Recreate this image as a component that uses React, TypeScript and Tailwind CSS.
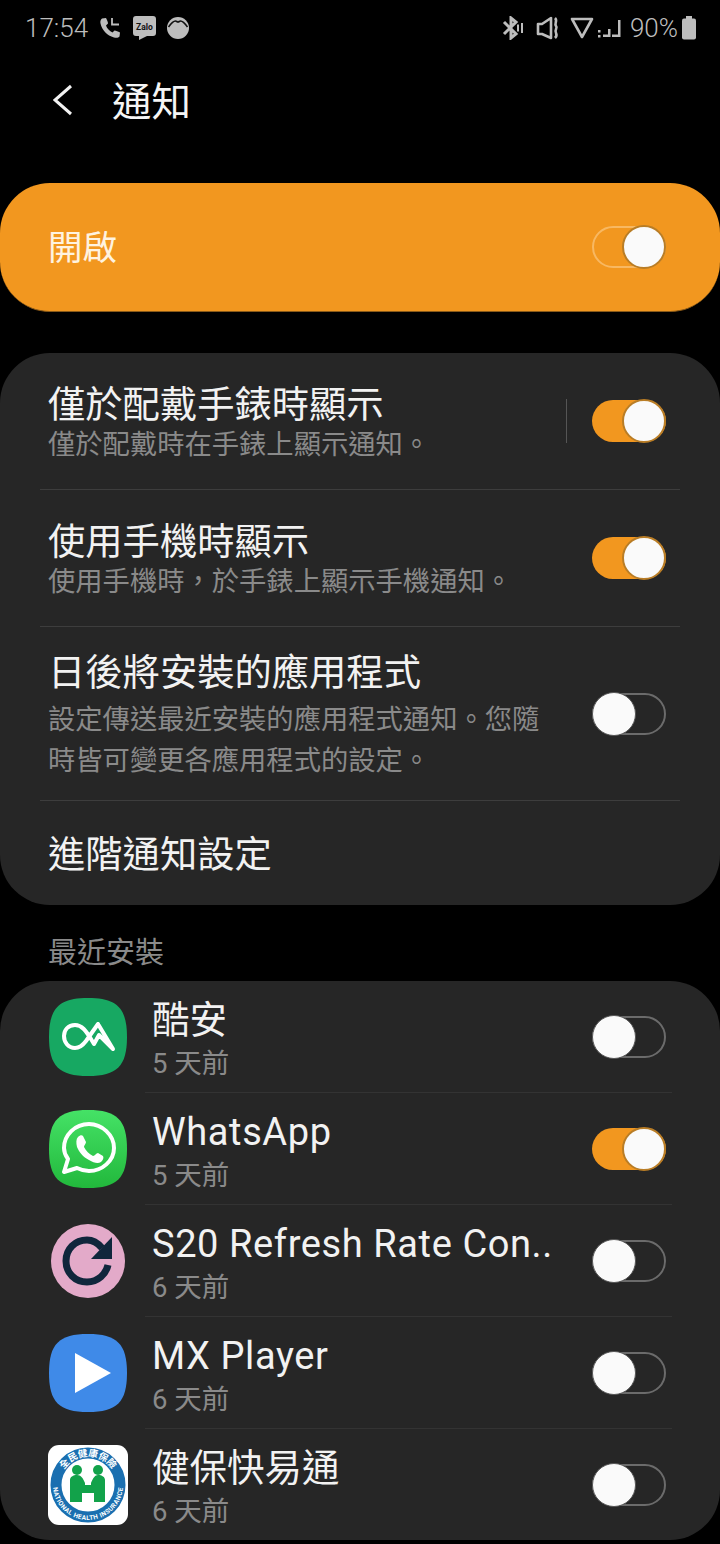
const CJK = "font-['Roboto','Noto_Sans_CJK_TC',sans-serif]";

// Samsung-style rounded square, drawn on a 78 box
const SQUIRCLE = "M39 0C68 0 78 10 78 39C78 68 68 78 39 78C10 78 0 68 0 39C0 10 10 0 39 0Z";

function Toggle({ on, onOrange = false }: { on: boolean; onOrange?: boolean }) {
  if (on) {
    return (
      <div
        className={`relative h-[42px] w-[74px] shrink-0 rounded-full ${
          onOrange ? "border-2 border-[#f8b862] bg-[#f2971f]" : "bg-[#f2971f]"
        }`}
      >
        <div
          className={`absolute top-1/2 size-[44px] -translate-y-1/2 rounded-full border-2 border-[#b97d26] bg-[#fafafa] ${
            onOrange ? "right-[-2px]" : "right-0"
          }`}
        />
      </div>
    );
  }
  return (
    <div className="relative h-[42px] w-[74px] shrink-0 rounded-full border-2 border-[#6b6b6b]">
      <div className="absolute left-[-2px] top-1/2 size-[44px] -translate-y-1/2 rounded-full border border-[#555] bg-[#fafafa]" />
    </div>
  );
}

function StatusBar() {
  return (
    <div className="flex h-[56px] items-center justify-between pl-[25px] pr-[24px] text-[#bdbdbd]">
      <div className="flex items-center">
        <span className="font-['Roboto',sans-serif] text-[26px] font-light leading-none">17:54</span>
        <svg className="ml-[11px]" width="22" height="22" viewBox="0 0 22 22" fill="none">
          <path d="M3 1.500L7 1C8 3 9 5 9 6.500L7 8.500C8 11.500 10.500 14 13.500 15.500L15.500 13.500C17 13.500 19 14.500 21 15.500L20.500 19.500C19.500 21 17 21 15 20.500C8 18.500 3 13 1.500 6.500C1 4.500 1.500 2.500 3 1.500Z" fill="#bdbdbd" />
          <path d="M13 1V7.500H20" stroke="#bdbdbd" strokeWidth="1.800" />
        </svg>
        <svg className="ml-[12px]" width="23" height="24" viewBox="0 0 23 24">
          <path d="M3 0H20C22 0 23 1 23 3V17C23 19 22 20 20 20H14L6 24V20H3C1 20 0 19 0 17V3C0 1 1 0 3 0Z" fill="#bdbdbd" />
          <text x="11.500" y="13.500" textAnchor="middle" fontSize="8.500" fontWeight="700" fontFamily="Roboto" fill="#111">Zalo</text>
        </svg>
        <svg className="ml-[11px]" width="22" height="22" viewBox="0 0 22 22">
          <circle cx="11" cy="11" r="11" fill="#bdbdbd" />
          <path d="M1.500 10C4 6.500 6.500 4 8.500 4C9.500 4 10 5 11 5C12 5 12.500 4 13.500 4C15.500 4 18 6.500 20.500 10" fill="none" stroke="#111" strokeWidth="1.600" />
        </svg>
      </div>
      <div className="flex items-center">
        <svg width="24" height="24" viewBox="0 0 24 24" fill="none" stroke="#bdbdbd" strokeWidth="3">
          <path d="M2 6L14 18L9 22V2L14 6L2 18" />
          <path d="M16 8.500V15.500M20 7V17" strokeWidth="2" />
        </svg>
        <svg className="ml-[10px]" width="24" height="24" viewBox="0 0 24 24" fill="none" stroke="#bdbdbd" strokeWidth="2.600">
          <path d="M2 8H6L15 2V22L6 18H2Z" strokeLinejoin="round" />
          <path d="M19 2C22 5 18 7 20 10C22 12 18 14 20 17C21 19 20 21 19 22" />
        </svg>
        <svg className="ml-[10px]" width="24" height="24" viewBox="0 0 24 24" fill="none" stroke="#bdbdbd" strokeWidth="2.600">
          <path d="M2 3H22L12 21Z" strokeLinejoin="round" />
        </svg>
        <svg className="ml-[4px]" width="24" height="24" viewBox="0 0 24 24" fill="#bdbdbd">
          <rect x="0" y="14" width="2.500" height="2.500" />
          <rect x="0" y="19" width="2.500" height="2.500" />
          <path d="M5 18.500H10V13H12.500V21H5ZM14 18.500H20V4H22.500V21H14Z" />
        </svg>
        <span className="ml-[8px] font-['Roboto',sans-serif] text-[26px] font-light leading-none">90%</span>
        <svg className="ml-[4px]" width="14" height="24" viewBox="0 0 14 24" fill="#bdbdbd">
          <rect x="4" y="0" width="6" height="3" />
          <rect x="0" y="2.500" width="14" height="21" rx="2" />
        </svg>
      </div>
    </div>
  );
}

function SettingRow({
  title,
  sub,
  on,
  className,
  textClassName,
  divider = false,
}: {
  title: string;
  sub: string[];
  on: boolean;
  className: string;
  textClassName: string;
  divider?: boolean;
}) {
  return (
    <div className={`mx-[40px] flex items-center border-b border-[#3d3d3d] pl-[8px] pr-[14px] ${className}`}>
      <div className={`min-w-0 flex-1 ${textClassName}`}>
        <div className="text-[37.300px] leading-[44px] text-[#f2f2f2]">{title}</div>
        {sub.map((line) => (
          <div key={line} className="whitespace-nowrap text-[27.300px] text-[#8a8a8a]">
            {line}
          </div>
        ))}
      </div>
      {divider && <div className="mr-[25px] h-[44px] w-px bg-[#555]" />}
      <Toggle on={on} />
    </div>
  );
}

function AppRow({
  name,
  ago,
  on,
  icon,
  latin = false,
  last = false,
}: {
  name: string;
  ago: string;
  on: boolean;
  icon: React.ReactNode;
  latin?: boolean;
  last?: boolean;
}) {
  return (
    <div className="flex h-[112px] items-center pl-[49px] pr-[54px]">
      <div className="flex size-[78px] shrink-0 items-center justify-center">{icon}</div>
      <div
        className={`ml-[18px] flex h-full min-w-0 flex-1 items-center pl-[7px] ${
          last ? "" : "relative after:absolute after:bottom-0 after:left-0 after:right-[-6px] after:h-px after:bg-[#333]"
        }`}
      >
        <div className="mt-[3px] min-w-0 flex-1">
          <div
            className={`whitespace-nowrap leading-[48px] text-[#f2f2f2] ${
              latin ? "text-[38px] tracking-[0.6px]" : "text-[37.500px]"
            }`}
          >
            {name}
          </div>
          <div className="mt-[3px] text-[27.500px] leading-[34px] text-[#8a8a8a]">{ago}</div>
        </div>
        <Toggle on={on} />
      </div>
    </div>
  );
}

function CoolApkIcon() {
  return (
    <svg width="78" height="78" viewBox="0 0 78 78" fill="none">
      <path d={SQUIRCLE} fill="#17a862" />
      <path
        d="M49 26L37 43C34 47 30 50 26 50C19 50 15 44 15 38C15 32 19 27 26 27C33 27 37 33 42 41L45 46L50 37L64 51L49 26"
        stroke="#fff"
        strokeWidth="4"
        strokeLinejoin="round"
        strokeLinecap="round"
      />
    </svg>
  );
}

function WhatsAppIcon() {
  return (
    <svg width="78" height="78" viewBox="0 0 78 78" fill="none">
      <defs>
        <linearGradient id="wa" x1="0" y1="0" x2="0" y2="1">
          <stop offset="0" stopColor="#45e266" />
          <stop offset="1" stopColor="#22b83c" />
        </linearGradient>
      </defs>
      <path d={SQUIRCLE} fill="url(#wa)" />
      <path
        d="M15 62L19 49C16 45 15 42 15 38C15 25 26 14 40 14C53 14 65 25 65 38C65 51 53 61 40 61C36 61 32 60 28 58Z"
        stroke="#fff"
        strokeWidth="4"
        strokeLinejoin="round"
      />
      <path
        d="M29 27C31 25 33 25 34 26L37 32C37 34 35 35 35 37C37 41 40 44 44 46C46 46 47 43 49 43L54 46C55 48 54 50 52 52C49 54 45 53 40 50C34 47 30 42 28 37C27 33 27 29 29 27Z"
        fill="#fff"
      />
    </svg>
  );
}

function RefreshIcon() {
  return (
    <svg width="74" height="74" viewBox="0 0 74 74" fill="none">
      <circle cx="37" cy="37" r="37" fill="#e3aac9" />
      <path d="M51 24C46 18 41 16 36 16C24 16 15 25 15 37C15 49 24 58 36 58C47 58 55 50 57 41" stroke="#10263c" strokeWidth="7" />
      <path d="M61 13V35H40Z" fill="#10263c" />
    </svg>
  );
}

function PlayerIcon() {
  return (
    <svg width="78" height="78" viewBox="0 0 78 78">
      <path d={SQUIRCLE} fill="#3f8ae8" />
      <path d="M26 19L62 39L26 59Z" fill="#fff" />
    </svg>
  );
}

function NhiIcon() {
  return (
    <svg className="shrink-0" width="80" height="80" viewBox="0 0 80 80">
      <rect width="80" height="80" rx="11" fill="#fff" />
      <circle cx="40" cy="40" r="32" fill="none" stroke="#1a6fb0" strokeWidth="11" />
      <path id="nhiTop" d="M11.500 40A28.500 28.500 0 0 1 68.500 40" fill="none" />
      <path id="nhiBottom" d="M5 40A35 35 0 0 0 75 40" fill="none" />
      <text fontSize="9.500" fill="#fff" fontFamily="'Noto Sans CJK TC', sans-serif" fontWeight="700">
        <textPath href="#nhiTop" startOffset="50%" textAnchor="middle">全民健康保險</textPath>
      </text>
      <text fontSize="6.500" fill="#fff" fontFamily="Roboto, sans-serif" fontWeight="700" letterSpacing="0.4">
        <textPath href="#nhiBottom" startOffset="50%" textAnchor="middle">NATIONAL HEALTH INSURANCE</textPath>
      </text>
      <g fill="#12a24a">
        <circle cx="29" cy="25" r="5" />
        <circle cx="50" cy="25" r="5" />
        <path d="M22 35C22 32 25 30 29 30C33 30 35 33 37 38V40H43V38C45 33 47 30 50 30C54 30 57 32 57 35V57H46V48H34V57H22Z" />
      </g>
    </svg>
  );
}

export default function App() {
  return (
    <div className={`h-[1544px] w-[720px] overflow-hidden bg-black ${CJK}`}>
      <StatusBar />

      <div className="flex h-[94px] items-center pl-[53px]">
        <svg className="mb-[6px]" width="20" height="32" viewBox="0 0 20 32" fill="none" stroke="#f2f2f2" strokeWidth="3">
          <path d="M18 2L2 16L18 30" />
        </svg>
        <span className="ml-[39px] text-[39.500px] leading-none text-[#f5f5f5]">通知</span>
      </div>

      <div className="mt-[33px] flex h-[129px] items-center justify-between rounded-[50px] border-b border-[#8a5a18] bg-[#f2971f] pl-[48px] pr-[54px]">
        <span className="pt-[2px] text-[34.500px] leading-none text-[#fff3e0]">開啟</span>
        <Toggle on onOrange />
      </div>

      <div className="mt-[41px] rounded-[50px] bg-[#262626]">
        <SettingRow
          className="h-[137px]"
          textClassName="mt-[3px] leading-[36px]"
          title="僅於配戴手錶時顯示"
          sub={["僅於配戴時在手錶上顯示通知。"]}
          on
          divider
        />
        <SettingRow
          className="h-[137px]"
          textClassName="mt-[3px] leading-[36px]"
          title="使用手機時顯示"
          sub={["使用手機時，於手錶上顯示手機通知。"]}
          on
        />
        <SettingRow
          className="h-[174px]"
          textClassName="mt-[5px] leading-[41px] [&>*:nth-child(2)]:mt-[5px]"
          title="日後將安裝的應用程式"
          sub={["設定傳送最近安裝的應用程式通知。您隨", "時皆可變更各應用程式的設定。"]}
          on={false}
        />
        <div className="flex h-[104px] items-center pl-[48px] pt-[5px] text-[37.300px] leading-none text-[#f2f2f2]">
          進階通知設定
        </div>
      </div>

      <div className="flex h-[76px] items-center pl-[48px] pt-[20px] text-[29px] leading-none text-[#8a8a8a]">最近安裝</div>

      <div className="h-[559px] rounded-[50px] bg-[#262626]">
        <AppRow name="酷安" ago="5 天前" on={false} icon={<CoolApkIcon />} />
        <AppRow name="WhatsApp" ago="5 天前" on icon={<WhatsAppIcon />} latin />
        <AppRow name="S20 Refresh Rate Con.." ago="6 天前" on={false} icon={<RefreshIcon />} latin />
        <AppRow name="MX Player" ago="6 天前" on={false} icon={<PlayerIcon />} latin />
        <AppRow name="健保快易通" ago="6 天前" on={false} icon={<NhiIcon />} last />
      </div>
    </div>
  );
}
